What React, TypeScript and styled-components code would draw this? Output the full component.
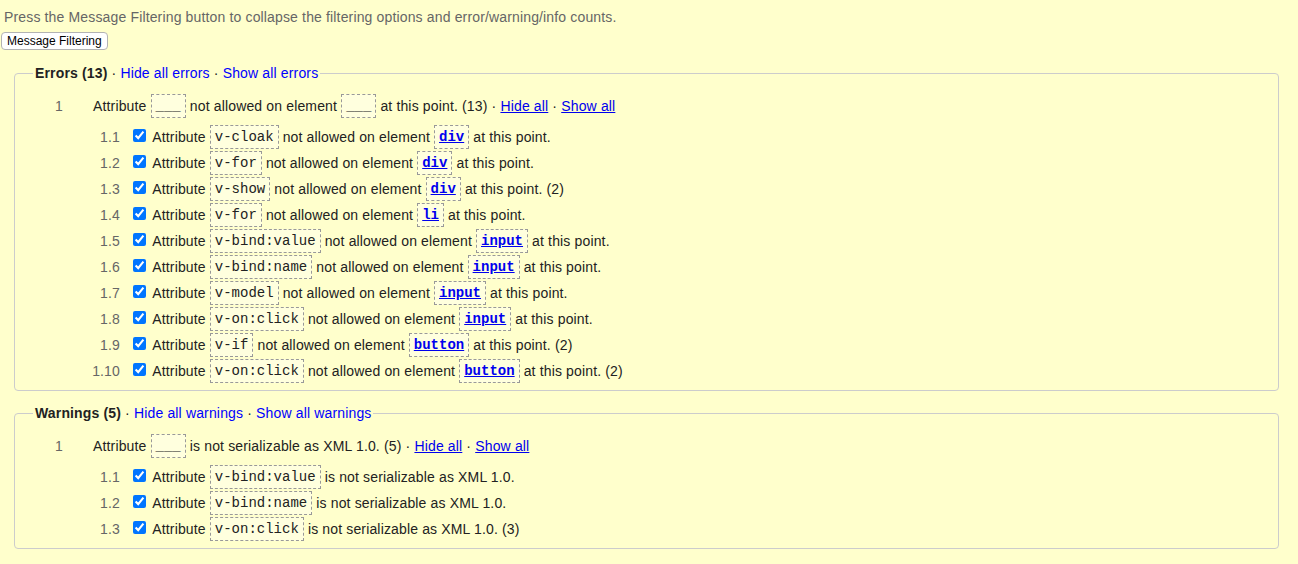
import React from 'react';
import styled, { createGlobalStyle } from 'styled-components';

interface SubMessage {
  num: string;
  attr: string;
  el?: string;
  suffix: string;
}

interface Group {
  title: string;
  count: number;
  kind: string;
  summaryCount: number;
  items: SubMessage[];
}

const GlobalStyle = createGlobalStyle`
  html, body {
    margin: 0;
    padding: 0;
    background: #ffffcc;
  }
  body {
    font-family: "Liberation Sans", Arial, Helvetica, sans-serif;
    font-size: 14px;
    letter-spacing: 0.15px;
    color: #222;
  }
`;

const groups: Group[] = [
  {
    title: 'Errors',
    count: 13,
    kind: 'errors',
    summaryCount: 13,
    items: [
      { num: '1.1', attr: 'v-cloak', el: 'div', suffix: 'at this point.' },
      { num: '1.2', attr: 'v-for', el: 'div', suffix: 'at this point.' },
      { num: '1.3', attr: 'v-show', el: 'div', suffix: 'at this point. (2)' },
      { num: '1.4', attr: 'v-for', el: 'li', suffix: 'at this point.' },
      { num: '1.5', attr: 'v-bind:value', el: 'input', suffix: 'at this point.' },
      { num: '1.6', attr: 'v-bind:name', el: 'input', suffix: 'at this point.' },
      { num: '1.7', attr: 'v-model', el: 'input', suffix: 'at this point.' },
      { num: '1.8', attr: 'v-on:click', el: 'input', suffix: 'at this point.' },
      { num: '1.9', attr: 'v-if', el: 'button', suffix: 'at this point. (2)' },
      { num: '1.10', attr: 'v-on:click', el: 'button', suffix: 'at this point. (2)' },
    ],
  },
  {
    title: 'Warnings',
    count: 5,
    kind: 'warnings',
    summaryCount: 5,
    items: [
      { num: '1.1', attr: 'v-bind:value', suffix: 'is not serializable as XML 1.0.' },
      { num: '1.2', attr: 'v-bind:name', suffix: 'is not serializable as XML 1.0.' },
      { num: '1.3', attr: 'v-on:click', suffix: 'is not serializable as XML 1.0. (3)' },
    ],
  },
];

function App() {
  return (
    <Page>
      <GlobalStyle />
      <Intro>Press the Message Filtering button to collapse the filtering options and error/warning/info counts.</Intro>
      <FilterButton type='button'>Message Filtering</FilterButton>
      {groups.map(group => (
        <Fieldset key={group.kind}>
          <Legend>
            <strong>{group.title} ({group.count})</strong> · <PlainLink>Hide all {group.kind}</PlainLink> · <PlainLink>Show all {group.kind}</PlainLink>
          </Legend>
          <MainRow>
            <MainNum>1</MainNum>
            Attribute <Code>___</Code>{' '}
            {group.kind === 'errors' ? (
              <>not allowed on element <Code>___</Code> at this point. ({group.summaryCount})</>
            ) : (
              <>is not serializable as XML 1.0. ({group.summaryCount})</>
            )}
            {' · '}<UnderLink>Hide all</UnderLink> · <UnderLink>Show all</UnderLink>
          </MainRow>
          <SubList>
            {group.items.map(item => (
              <SubRow key={item.num}>
                <SubNum>{item.num}</SubNum>
                <Check type='checkbox' defaultChecked readOnly />
                {' '}Attribute <Code>{item.attr}</Code>{' '}
                {item.el ? (
                  <>not allowed on element <Code><CodeLink>{item.el}</CodeLink></Code> {item.suffix}</>
                ) : (
                  <>{item.suffix}</>
                )}
              </SubRow>
            ))}
          </SubList>
        </Fieldset>
      ))}
    </Page>
  );
}

export default App;

const Page = styled.div`
  padding: 9px 0 16px 0;
`;

const Intro = styled.p`
  margin: 0 0 7px 4px;
  line-height: 16px;
  color: #666;
`;

const FilterButton = styled.button`
  display: block;
  margin-left: 1px;
  height: 18px;
  padding: 0 5px;
  font-family: "Liberation Sans", Arial, Helvetica, sans-serif;
  font-size: 12px;
  color: #000;
  background: #fff;
  border: 1px solid #b3b3b3;
  border-radius: 4px;
`;

const Fieldset = styled.fieldset`
  margin: 15px 19px 0 14px;
  padding: 0 18px 6px 18px;
  border: 1px solid #cccccc;
  border-radius: 4px;
  min-inline-size: auto;

  & + & {
    margin-top: 14px;
  }
`;

const Legend = styled.legend`
  padding: 0 2px;
  line-height: 16px;
  color: #222;

  strong {
    font-weight: bold;
  }
`;

const PlainLink = styled.a`
  color: #0000ff;
  text-decoration: none;
  cursor: pointer;
`;

const UnderLink = styled.a`
  color: #0000ee;
  text-decoration: underline;
  cursor: pointer;
`;

const MainRow = styled.div`
  margin-top: 12px;
  height: 26px;
  line-height: 26px;
  white-space: nowrap;
`;

const MainNum = styled.span`
  display: inline-block;
  width: 30px;
  margin-right: 30px;
  text-align: right;
  color: #666;
`;

const SubList = styled.div`
  margin-top: 5px;
`;

const SubRow = styled.div`
  height: 26px;
  line-height: 26px;
  white-space: nowrap;
`;

const SubNum = styled.span`
  display: inline-block;
  width: 87px;
  margin-right: 9px;
  text-align: right;
  color: #666;
`;

const Check = styled.input`
  margin: 3px 3px 3px 4px;
  width: 13px;
  height: 13px;
  vertical-align: baseline;
`;

const Code = styled.code`
  display: inline-block;
  vertical-align: middle;
  line-height: 16px;
  padding: 3px 4px;
  border: 1px dashed #999;
  background: rgba(255, 255, 255, 0.35);
  font-family: "Liberation Mono", "Courier New", monospace;
  font-size: 14px;
  letter-spacing: 0;
  color: #222;
  position: relative;
  top: -1px;
`;

const CodeLink = styled.a`
  color: #0000ee;
  font-weight: bold;
  text-decoration: underline;
  cursor: pointer;
`;
